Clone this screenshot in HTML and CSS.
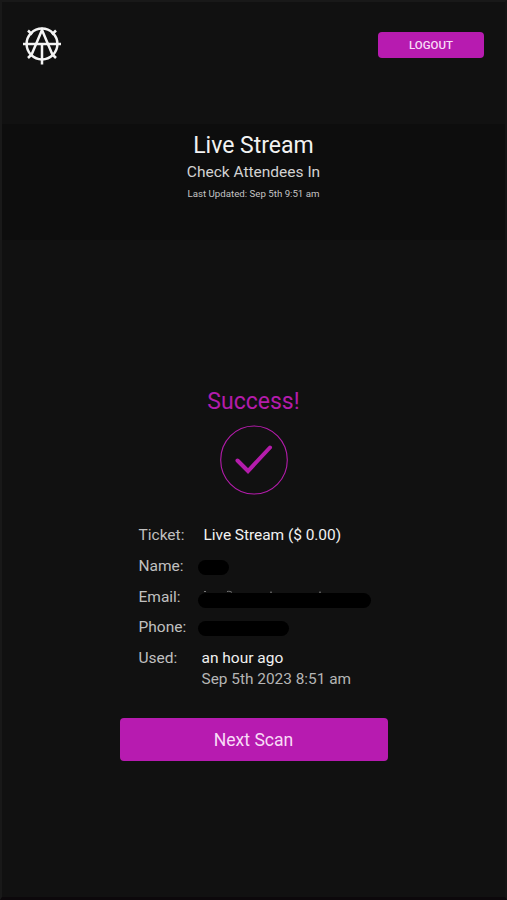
FILE: index.html
```html
<!DOCTYPE html>
<html lang="en">
<head>
    <meta charset="UTF-8">
    <meta name="viewport" content="width=device-width, initial-scale=1.0">
    <title>Check Attendees In</title>
    <link rel="stylesheet" href="styles.css">
</head>
<body>
    <div class="app">
        <header class="header">
            <svg class="logo" viewBox="0 0 40 40" fill="none" stroke="#f4f4f4" stroke-width="2.5">
                <circle cx="20" cy="19.5" r="15.4"/>
                <path d="M1 19.5H39M20 19.5V40"/>
                <path d="M9 31.5L20 5.5L31 31.5"/>
                <path d="M6 6L10 10M34 6L30 10M6 33.5L10 29.5M34 33.5L30 29.5"/>
            </svg>
            <button class="logout">LOGOUT</button>
        </header>

        <section class="event">
            <h1>Live Stream</h1>
            <h2>Check Attendees In</h2>
            <p>Last Updated: Sep 5th 9:51 am</p>
        </section>

        <main class="result">
            <h3>Success!</h3>
            <svg class="check" viewBox="0 0 68 70" fill="none" stroke="#b41cab">
                <ellipse cx="34" cy="35" rx="33.3" ry="34" stroke-width="1.1"/>
                <path d="M17.5 35.5L28 46L50 22.5" stroke-width="4" stroke-linecap="round"/>
            </svg>

            <dl class="details">
                <dt>Ticket:</dt>
                <dd class="ticket">Live Stream ($ 0.00)</dd>
                <dt>Name:</dt>
                <dd><span class="redacted name"></span></dd>
                <dt>Email:</dt>
                <dd>
                    <svg class="specks" viewBox="0 0 173 4" fill="none" stroke="#777">
                        <path d="M6 2.5H8M29 2.5C31 2 33 2.5 34 3.5M72 3.2H74M121 3.2H123"/>
                    </svg>
                    <span class="redacted email"></span>
                </dd>
                <dt>Phone:</dt>
                <dd><span class="redacted phone"></span></dd>
                <dt>Used:</dt>
                <dd>an hour ago<small>Sep 5th 2023 8:51 am</small></dd>
            </dl>

            <button class="next">Next Scan</button>
        </main>
    </div>
</body>
</html>
```

FILE: styles.css
```css
* {
    box-sizing: border-box;
}

body {
    margin: 0;
    background: #111;
    color: #f2f2f2;
    font-family: Roboto, sans-serif;
}

.app {
    height: 900px;
    border: 2px solid #191919;
    border-right-color: #141414;
    border-bottom: 3px solid #0c080b;
    overflow: hidden;
}

.header {
    display: flex;
    justify-content: space-between;
    align-items: flex-start;
    height: 122px;
    padding: 22px 21px 0 20px;
}

.logo {
    width: 40px;
    height: 41px;
}

button {
    border: none;
    background: #b71bb0;
    color: #f9dcf7;
    font-family: inherit;
    cursor: pointer;
}

.logout {
    width: 106px;
    height: 26px;
    margin-top: 8px;
    padding: 0;
    border-radius: 4px;
    font-size: 11.5px;
    font-weight: 500;
}

.event {
    height: 116px;
    padding-top: 8px;
    background: #0d0d0d;
    text-align: center;
}

.event h1,
.event h2,
.event p {
    margin: 0;
    font-weight: 400;
}

.event h1 {
    font-size: 23px;
    line-height: 28px;
}

.event h2 {
    color: #d2d2d2;
    font-size: 15.5px;
    line-height: 24px;
}

.event p {
    color: #c4c4c4;
    font-size: 9.7px;
    line-height: 19px;
}

.result {
    display: flex;
    flex-direction: column;
    align-items: center;
    padding-top: 147px;
}

.result h3 {
    margin: 0;
    color: #b41cab;
    font-size: 23px;
    font-weight: 400;
    line-height: 30px;
}

.check {
    width: 68px;
    height: 70px;
    margin-top: 8px;
}

.details {
    display: grid;
    grid-template-columns: 59px 1fr;
    grid-template-rows: repeat(4, 30.75px) auto;
    width: 233px;
    margin: 29px 0 0 3px;
    font-size: 15.5px;
    line-height: 22px;
}

.details dt {
    color: #c0c0c0;
}

.details dd {
    margin: 0;
    padding-left: 4px;
}

.details .ticket {
    padding-left: 6px;
    letter-spacing: -0.05px;
}

.details small {
    display: block;
    color: #b5b5b5;
    font-size: 15.4px;
    line-height: 20px;
}

.redacted {
    display: block;
    height: 15px;
    margin: 5px 0 0 -4px;
    border-radius: 8px;
    background: #000;
}

.name {
    width: 31px;
}

.specks {
    display: block;
    width: 173px;
    height: 4px;
    margin: 3px 0 0 -4px;
}

.email {
    width: 173px;
    margin-top: 0;
}

.phone {
    width: 91px;
}

.next {
    width: 268px;
    height: 43px;
    margin-top: 29px;
    border-radius: 4px;
    font-size: 17.6px;
    line-height: 45px;
    padding: 0;
}
```
